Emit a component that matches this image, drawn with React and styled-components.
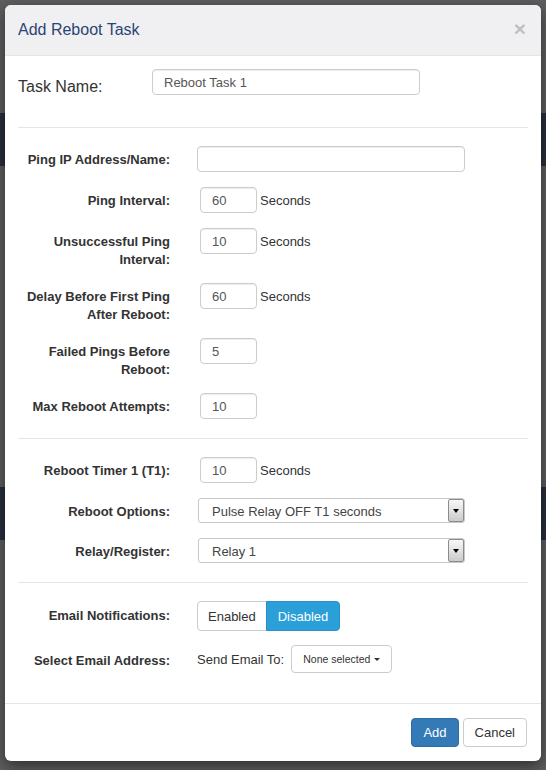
import React from "react";
import styled, { createGlobalStyle } from "styled-components";

const GlobalStyle = createGlobalStyle`
  * { box-sizing: border-box; }
  body {
    margin: 0;
    font-family: "Liberation Sans", Arial, sans-serif;
    font-size: 13px;
    color: #333;
    background: #5e5e5e;
  }
`;

const Backdrop = styled.div`
  min-height: 770px;
  padding: 5px;
  background:
    linear-gradient(
      to bottom,
      transparent 113px, #28303e 113px, #28303e 166px, transparent 166px,
      transparent 487px, #28303e 487px, #28303e 540px, transparent 540px
    ),
    #5e5e5e;
`;

const Modal = styled.div`
  width: 536px;
  background: #fff;
  border-radius: 6px;
  box-shadow: 0 5px 15px rgba(0, 0, 0, 0.5);
  overflow: hidden;
`;

const Header = styled.div`
  display: flex;
  align-items: center;
  justify-content: space-between;
  height: 51px;
  padding: 0 15px 0 13px;
  background: #f0f0f2;
  border-bottom: 1px solid #e5e5e5;
`;

const Title = styled.h4`
  margin: 0;
  font-size: 16px;
  font-weight: normal;
  line-height: 20px;
  color: #2b4574;
`;

const Close = styled.button`
  padding: 0;
  border: 0;
  background: none;
  font-family: inherit;
  font-size: 21px;
  font-weight: bold;
  line-height: 1;
  color: #000;
  opacity: 0.2;
  margin-top: -4px;
`;

const Section = styled.div`
  margin: 0 13px;
  padding: ${(p) => p.$pad || "18px 0 4px"};
  border-bottom: ${(p) => (p.$divider ? "1px solid #e5e5e5" : "none")};
`;

const NameRow = styled.div`
  display: flex;
  align-items: flex-start;
`;

const NameLabel = styled.label`
  width: 134px;
  flex: none;
  margin-top: 7px;
  font-size: 16px;
  line-height: 22px;
  color: #333;
`;

const Row = styled.div`
  display: flex;
  align-items: flex-start;
  margin-bottom: ${(p) => (p.$gap != null ? p.$gap : 15)}px;
`;

const Label = styled.label`
  width: 152px;
  flex: none;
  margin-right: 27px;
  padding-top: ${(p) => (p.$pt != null ? p.$pt : 5)}px;
  text-align: right;
  font-size: 13px;
  font-weight: bold;
  line-height: 17.5px;
  color: #333;
`;

const Controls = styled.div`
  display: flex;
  align-items: center;
  gap: 3px;
`;

const TextInput = styled.input`
  width: ${(p) => p.$width || "57px"};
  height: 26px;
  margin: 0 0 0 ${(p) => p.$offset || 0}px;
  padding: 0 11px;
  border: 1px solid #ccc;
  border-radius: 4px;
  box-shadow: inset 0 1px 1px rgba(0, 0, 0, 0.075);
  background: #fff;
  font-family: inherit;
  font-size: 13px;
  color: #555;
  outline: none;
`;

const Unit = styled.span`
  font-size: 13px;
  color: #333;
`;

const Select = styled.div`
  display: flex;
  align-items: center;
  width: 267px;
  height: 25px;
  margin-left: 1px;
  padding-left: 13px;
  border: 1px solid #c8c8c8;
  border-radius: 3px;
  background: #fff;
`;

const SelectValue = styled.span`
  flex: 1;
  padding-top: 2px;
  font-size: 13px;
  color: #444;
  white-space: nowrap;
  overflow: hidden;
`;

const SelectArrow = styled.span`
  display: flex;
  align-items: center;
  justify-content: center;
  width: 16px;
  align-self: stretch;
  border: 1px solid #8c8c8c;
  border-radius: 2px;
  background: linear-gradient(to bottom, #f8f8f8, #cbcbcb);

  &::after {
    content: "";
    width: 0;
    height: 0;
    border-left: 3.5px solid transparent;
    border-right: 3.5px solid transparent;
    border-top: 4px solid #000;
  }
`;

const ToggleGroup = styled.div`
  display: flex;
`;

const ToggleButton = styled.button`
  height: 30px;
  padding: 0 ${(p) => (p.$active ? 11 : 10)}px;
  font-family: inherit;
  font-size: 13px;
  border: 1px solid ${(p) => (p.$active ? "#2791c9" : "#ccc")};
  background: ${(p) => (p.$active ? "#2a9fd8" : "#fff")};
  color: ${(p) => (p.$active ? "#fff" : "#333")};

  &:first-child {
    border-radius: 4px 0 0 4px;
  }
  &:last-child {
    border-radius: 0 4px 4px 0;
    margin-left: -1px;
  }
`;

const DropButton = styled.button`
  display: inline-flex;
  align-items: center;
  height: 28px;
  margin-left: 4px;
  padding: 0 11px;
  border: 1px solid #ccc;
  border-radius: 4px;
  background: #fff;
  font-family: inherit;
  font-size: 10.5px;
  color: #333;
`;

const Caret = styled.span`
  display: inline-block;
  width: 0;
  height: 0;
  margin-left: 4px;
  border-left: 3px solid transparent;
  border-right: 3px solid transparent;
  border-top: 3px solid #333;
`;

const Footer = styled.div`
  display: flex;
  justify-content: flex-end;
  gap: 4px;
  padding: 14px;
  border-top: 1px solid #e5e5e5;
`;

const Button = styled.button`
  height: 29px;
  padding: 0 11px;
  border-radius: 4px;
  font-family: inherit;
  font-size: 13px;
  border: 1px solid ${(p) => (p.$primary ? "#2e6da4" : "#ccc")};
  background: ${(p) => (p.$primary ? "#337ab7" : "#fff")};
  color: ${(p) => (p.$primary ? "#fff" : "#333")};
`;

const pingRows = [
  { label: "Ping Interval:", value: "60", unit: "Seconds" },
  { label: "Unsuccessful Ping Interval:", value: "10", unit: "Seconds" },
  { label: "Delay Before First Ping After Reboot:", value: "60", unit: "Seconds" },
  { label: "Failed Pings Before Reboot:", value: "5" },
  { label: "Max Reboot Attempts:", value: "10" },
];

export default function App() {
  return (
    <>
      <GlobalStyle />
      <Backdrop>
        <Modal>
          <Header>
            <Title>Add Reboot Task</Title>
            <Close>×</Close>
          </Header>

          <Section $divider $pad="13px 0 29px">
            <NameRow>
              <NameLabel>Task Name:</NameLabel>
              <TextInput $width="268px" defaultValue="Reboot Task 1" />
            </NameRow>
          </Section>

          <Section $divider>
            <Row>
              <Label>Ping IP Address/Name:</Label>
              <Controls>
                <TextInput $width="268px" />
              </Controls>
            </Row>
            {pingRows.map((row) => (
              <Row key={row.label}>
                <Label>{row.label}</Label>
                <Controls>
                  <TextInput $offset={3} defaultValue={row.value} />
                  {row.unit && <Unit>{row.unit}</Unit>}
                </Controls>
              </Row>
            ))}
          </Section>

          <Section $divider>
            <Row>
              <Label>Reboot Timer 1 (T1):</Label>
              <Controls>
                <TextInput $offset={3} defaultValue="10" />
                <Unit>Seconds</Unit>
              </Controls>
            </Row>
            <Row>
              <Label>Reboot Options:</Label>
              <Select>
                <SelectValue>Pulse Relay OFF T1 seconds</SelectValue>
                <SelectArrow />
              </Select>
            </Row>
            <Row>
              <Label>Relay/Register:</Label>
              <Select>
                <SelectValue>Relay 1</SelectValue>
                <SelectArrow />
              </Select>
            </Row>
          </Section>

          <Section $pad="18px 0 15px">
            <Row $gap={14}>
              <Label $pt={6}>Email Notifications:</Label>
              <ToggleGroup>
                <ToggleButton>Enabled</ToggleButton>
                <ToggleButton $active>Disabled</ToggleButton>
              </ToggleGroup>
            </Row>
            <Row>
              <Label $pt={7}>Select Email Address:</Label>
              <Controls>
                <Unit>Send Email To:</Unit>
                <DropButton>
                  None selected
                  <Caret />
                </DropButton>
              </Controls>
            </Row>
          </Section>

          <Footer>
            <Button $primary>Add</Button>
            <Button>Cancel</Button>
          </Footer>
        </Modal>
      </Backdrop>
    </>
  );
}
